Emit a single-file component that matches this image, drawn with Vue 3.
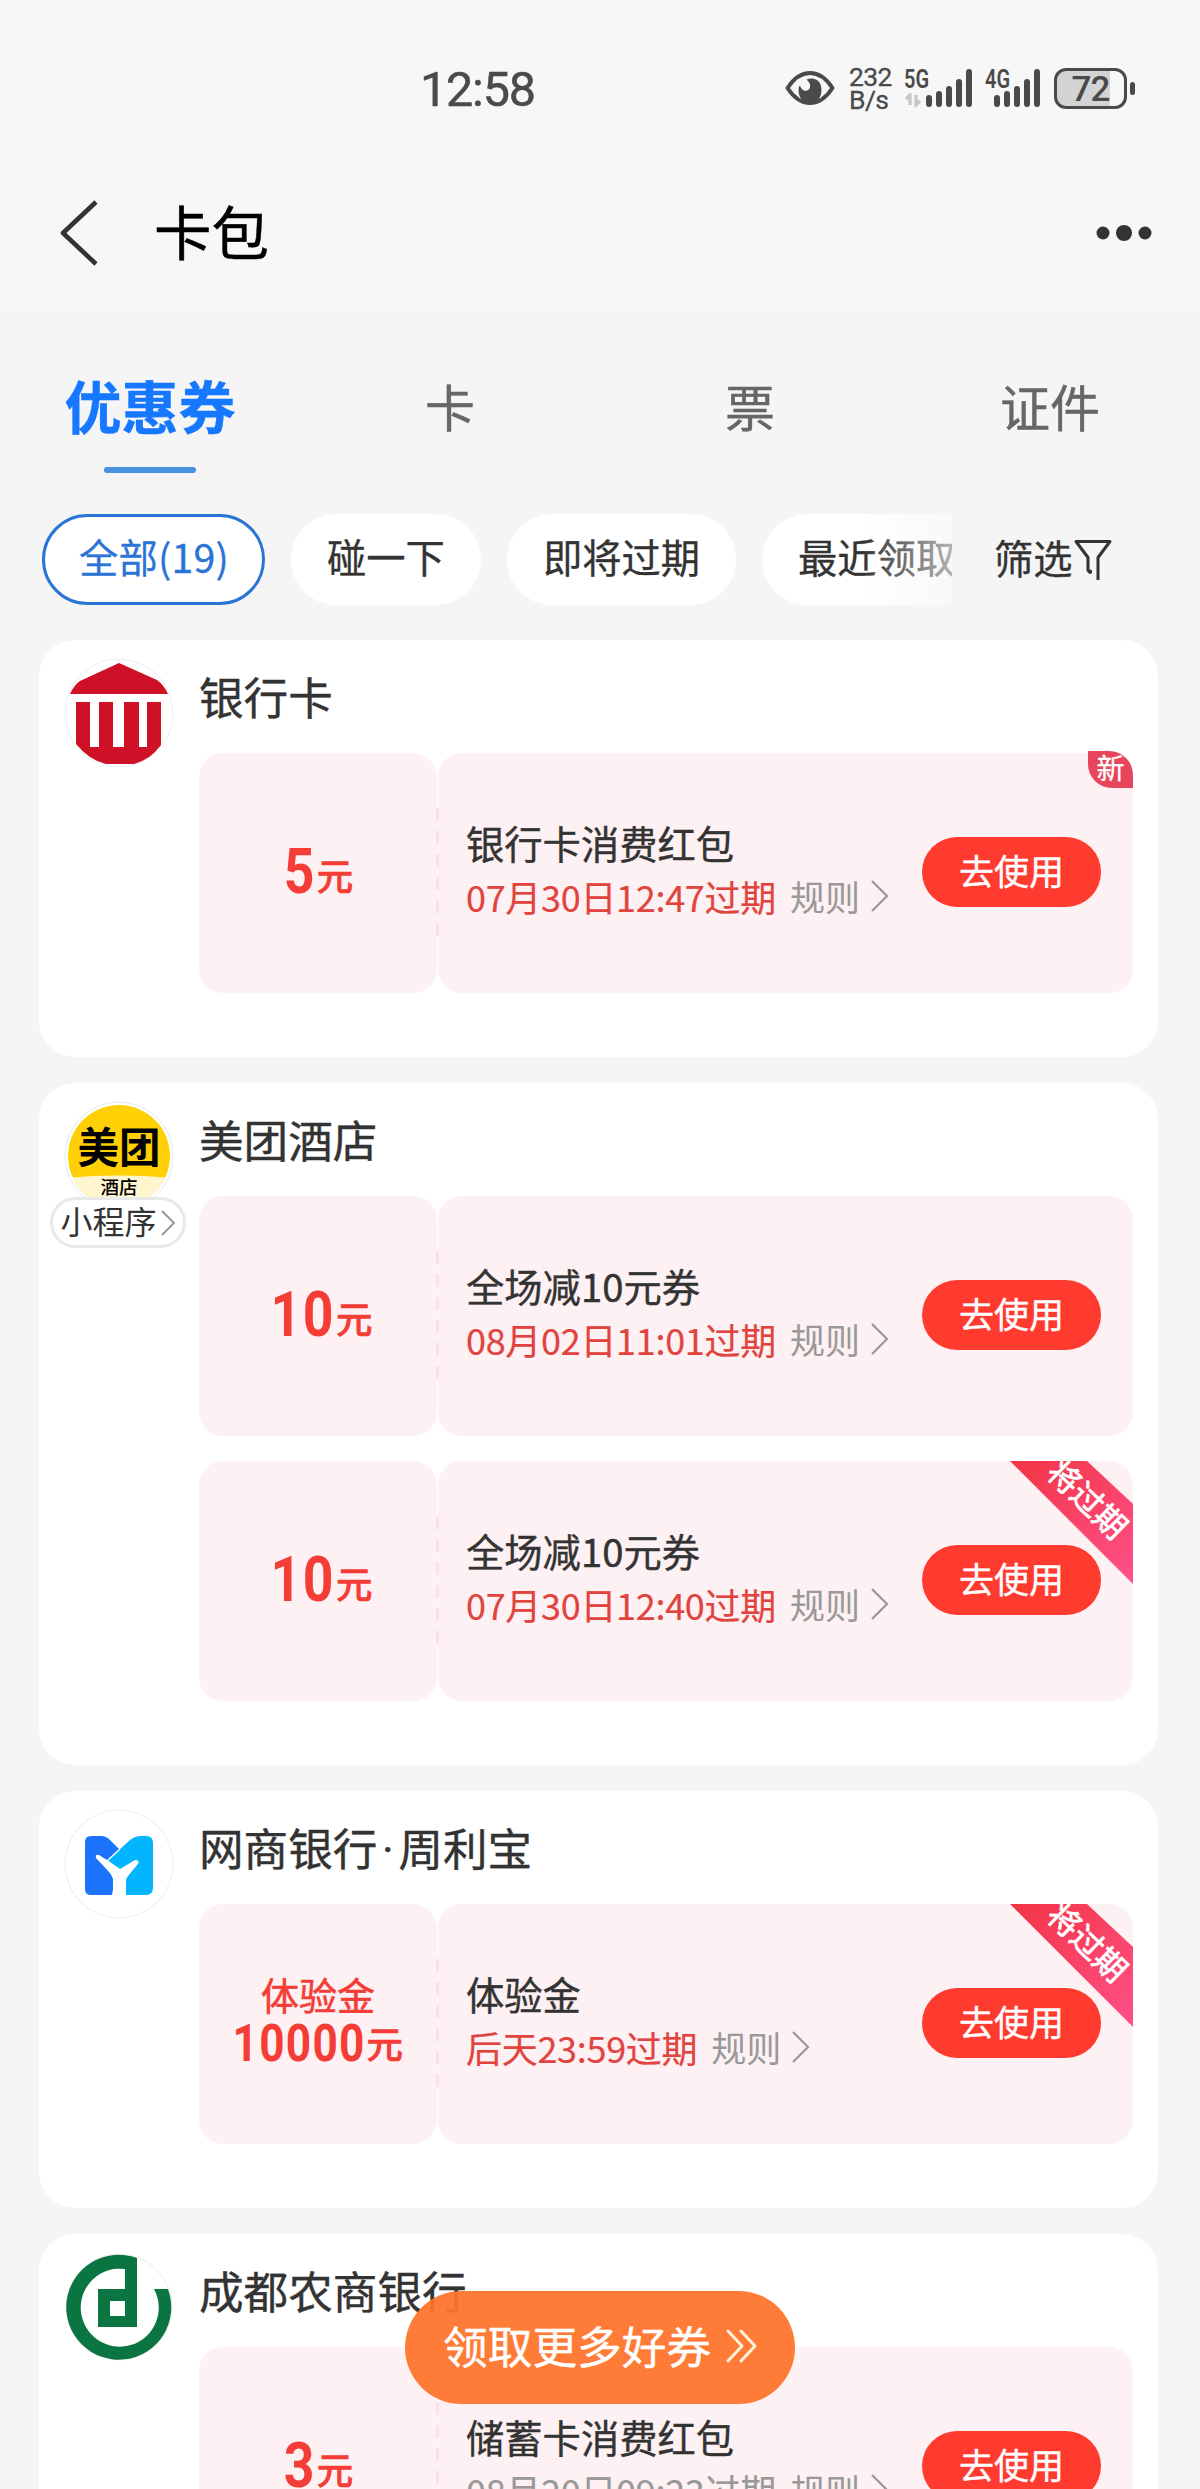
<script setup>
const tabs = ['优惠券', '卡', '票', '证件']
const chips = [
  { label: '全部(19)', active: true },
  { label: '碰一下' },
  { label: '即将过期' },
  { label: '最近领取' },
]
const bars = [12, 16, 21, 28, 38]
const groups = [
  {
    logo: 'bank',
    title: ['银行卡'],
    coupons: [{ amount: '5', name: '银行卡消费红包', date: '07月30日12:47过期', tag: 'new' }],
  },
  {
    logo: 'meituan',
    title: ['美团酒店'],
    mini: true,
    coupons: [
      { amount: '10', name: '全场减10元券', date: '08月02日11:01过期' },
      { amount: '10', name: '全场减10元券', date: '07月30日12:40过期', tag: 'soon' },
    ],
  },
  {
    logo: 'mybank',
    title: ['网商银行', '周利宝'],
    coupons: [{ label: '体验金', amount: '10000', name: '体验金', date: '后天23:59过期', tag: 'soon' }],
  },
  {
    logo: 'cdrcb',
    title: ['成都农商银行'],
    coupons: [{ amount: '3', name: '储蓄卡消费红包', date: '08月20日09:23过期', muted: true }],
  },
]
</script>

<template>
  <div class="page">
    <header class="top">
      <div class="status">
        <span class="clock">12:58</span>
        <svg class="eye" width="50" height="36" viewBox="0 0 50 36">
          <path d="M2.500 18C9 8 16 3 25 3s16 5 22.500 15C41 28 34 33 25 33S9 28 2.500 18Z" fill="none" stroke="#4a4a4a" stroke-width="4" stroke-linejoin="round" />
          <path d="M21.500 9.500C31 6 36.500 12 36.500 20c0 8-5 13-11.500 13S13.500 28 13.500 20c0-2 .5-3.500 1.500-4.500 1 4 4 6 7 5 4.500-1.500 4-7.500-.5-11Z" fill="#4a4a4a" />
        </svg>
        <div class="speed"><span>232</span><span>B/s</span></div>
        <div class="signal">
          <span class="net">5G</span>
          <svg class="arrows" width="18" height="14" viewBox="0 0 18 14">
            <path d="M2 6 6 2v10M16 8l-4 4V2" fill="none" stroke="#c6c6c6" stroke-width="3.200" />
          </svg>
          <div class="bars"><i v-for="h in bars" :key="h" :style="{ height: h + 'px' }"></i></div>
        </div>
        <div class="signal second">
          <span class="net">4G</span>
          <div class="bars"><i v-for="h in bars" :key="h" :style="{ height: h + 'px' }"></i></div>
        </div>
        <div class="battery">72</div>
        <i class="nub"></i>
      </div>
      <div class="nav">
        <svg class="back" width="40" height="68" viewBox="0 0 40 68">
          <path d="M37 3 4 34 37 65" fill="none" stroke="#333" stroke-width="4.600" stroke-linejoin="round" />
        </svg>
        <h1>卡包</h1>
        <svg class="more" width="60" height="20" viewBox="0 0 60 20">
          <circle cx="9" cy="10" r="6.500" fill="#333" /><circle cx="30" cy="10" r="8" fill="#333" /><circle cx="51" cy="10" r="6.500" fill="#333" />
        </svg>
      </div>
    </header>

    <nav class="tabs">
      <div v-for="(t, i) in tabs" :key="t" class="tab" :class="{ on: i === 0 }">{{ t }}</div>
    </nav>

    <div class="filters">
      <div class="chips">
        <span v-for="c in chips" :key="c.label" class="chip" :class="{ active: c.active }">{{ c.label }}</span>
      </div>
      <div class="filter">
        <span>筛选</span>
        <svg width="40" height="44" viewBox="0 0 40 44">
          <path d="M17.500 35V33L17 34.500 15 32.500V19.500L3 3.500H37L25 19.500V42" fill="none" stroke="#333" stroke-width="3" stroke-linejoin="round" />
        </svg>
      </div>
    </div>

    <main class="list">
      <section v-for="g in groups" :key="g.logo" class="card">
        <div class="side">
          <svg v-if="g.logo === 'bank'" class="logo" width="110" height="110" viewBox="0 0 110 110">
            <circle cx="55" cy="55" r="54" fill="#fff" stroke="#e9eef0" />
            <path d="M55 5 93 22Q100 27 104 36H6Q10 27 16 23Z" fill="#ce1126" />
            <path d="M12 44H26V89H35V44H49V89H60V44H75V89H83V44H97V87Q86 102 70 106H42Q25 102 12 86Z" fill="#ce1126" />
          </svg>
          <svg v-else-if="g.logo === 'meituan'" class="logo" width="110" height="110" viewBox="0 0 110 110">
            <defs><clipPath id="mt"><circle cx="55" cy="55" r="51" /></clipPath></defs>
            <circle cx="55" cy="55" r="54" fill="#fff" stroke="#e9e9e9" />
            <g clip-path="url(#mt)">
              <rect width="110" height="110" fill="#ffd005" />
              <path d="M0 77Q55 72 110 77V110H0Z" fill="#fff5cf" />
            </g>
            <text x="55" y="62" text-anchor="middle" font-size="41.500" font-weight="700">美团</text>
            <text x="55" y="93" text-anchor="middle" font-size="18.500" font-weight="500">酒店</text>
          </svg>
          <svg v-else-if="g.logo === 'mybank'" class="logo" width="110" height="110" viewBox="0 0 110 110">
            <circle cx="55" cy="55" r="54" fill="#fff" stroke="#ececec" />
            <path d="M27 27H37Q42 27 46 31L56 41 48 86H27Q21 86 21 80V33Q21 27 27 27Z" fill="#1b74fb" />
            <path d="M43 52 66 31Q71 27 77 27H82Q89 27 89 34V79Q89 86 82 86H62L54 70Z" fill="#03b4ff" />
            <path d="M43 52 56 40" stroke="#fff" stroke-width="1.500" />
            <path d="M49 86V70Q48 66 45 63L32 49Q31 45 35 46L46 53 56 60 71 51Q76 51 74 55L64 67Q62 69 62 73V86Z" fill="#fff" />
          </svg>
          <svg v-else class="logo" width="110" height="110" viewBox="0 0 110 110">
            <circle cx="55" cy="55" r="53" fill="#fff" stroke="#ececec" />
            <path fill="#0a7540" fill-rule="evenodd" d="M73 6A52.500 52.500 0 1 0 104 37H90A39 39 0 1 1 61 17V37H34V75H73ZM46 49H61V64H46Z" />
          </svg>
          <div v-if="g.mini" class="mini">
            <span>小程序</span>
            <svg width="16" height="28" viewBox="0 0 16 28"><path d="M2 2 14 14 2 26" fill="none" stroke="#999" stroke-width="2" /></svg>
          </div>
        </div>
        <div class="body">
          <h2>
            <template v-for="(part, i) in g.title" :key="part"><span v-if="i" class="dot">·</span>{{ part }}</template>
          </h2>
          <div v-for="(c, i) in g.coupons" :key="i" class="coupon">
            <div class="worth">
              <div v-if="c.label" class="label">{{ c.label }}</div>
              <div class="sum" :class="{ small: c.label }"><b>{{ c.amount }}</b><span>元</span></div>
            </div>
            <div class="detail">
              <i class="tear"></i>
              <div class="info">
                <div class="name">{{ c.name }}</div>
                <div class="meta">
                  <span class="date" :class="{ muted: c.muted }">{{ c.date }}</span>
                  <span class="rule">规则</span>
                  <svg width="20" height="34" viewBox="0 0 20 34"><path d="M2 2 17 17 2 32" fill="none" stroke="#999" stroke-width="2.200" /></svg>
                </div>
              </div>
              <button class="use">去使用</button>
              <span v-if="c.tag === 'new'" class="new">新</span>
              <svg v-if="c.tag === 'soon'" class="soon" width="124" height="124" viewBox="0 0 124 124">
                <defs>
                  <linearGradient :id="'r' + g.logo" x1="0" y1="0" x2="1" y2="1">
                    <stop offset="0" stop-color="#f23545" /><stop offset="1" stop-color="#ff5088" />
                  </linearGradient>
                </defs>
                <path d="M1 0H78L124 43V123Z" :fill="'url(#r' + g.logo + ')'" />
                <text transform="translate(78 39) rotate(44)" y="11" text-anchor="middle" font-size="32" fill="#fff" stroke="#fff" stroke-width=".7">将过期</text>
              </svg>
            </div>
          </div>
        </div>
      </section>
    </main>

    <div class="fab">
      <span>领取更多好券</span>
      <svg width="34" height="36" viewBox="0 0 34 36">
        <path d="M3 3 17 18 3 33M16 3 30 18 16 33" fill="none" stroke="#fff2d8" stroke-width="3" stroke-linecap="round" stroke-linejoin="round" />
      </svg>
    </div>
  </div>
</template>

<style>
body { background: #f5f5f5; }
</style>

<style scoped>
.page {
  position: relative;
  width: 1200px;
  height: 2489px;
  overflow: hidden;
  background: #f5f5f5;
  color: #333;
  font-family: "Noto Sans CJK SC", sans-serif;
}
.page * { box-sizing: border-box; }
svg { display: block; flex: none; }
h1, h2 { margin: 0; font-weight: 400; }
.top { height: 310px; background: #f7f7f7; }
.status {
  display: flex;
  align-items: center;
  height: 176px;
  color: #4a4a4a;
  font-family: Roboto, sans-serif;
}
.clock {
  width: 365px;
  margin-left: 420px;
  font-size: 48.500px;
  letter-spacing: -1.200px;
  line-height: 50px;
  padding-top: 3px;
  -webkit-text-stroke: .5px;
}
.speed {
  width: 44px;
  margin-left: 14px;
  display: flex;
  flex-direction: column;
  font-size: 26.500px;
  line-height: 23px;
  letter-spacing: -.6px;
  -webkit-text-stroke: .3px;
}
.signal { position: relative; width: 68px; height: 38px; margin-left: 11px; display: flex; justify-content: flex-end; }
.signal.second { margin-left: 0; }
.net { position: absolute; left: 0; top: -1px; font-size: 25px; line-height: 24px; font-weight: 600; transform: scaleX(.8); transform-origin: left; }
.signal.second .net { left: 13px; }
.arrows { position: absolute; left: 0; bottom: 0; }
.bars { display: flex; align-items: flex-end; gap: 4px; }
.bars i { width: 6px; border-radius: 3px; background: #4a4a4a; }
.battery {
  width: 73px;
  height: 41px;
  margin-left: 14px;
  border: 3px solid #4a4a4a;
  border-radius: 12px;
  background: linear-gradient(90deg, #d3d3d3 53px, transparent 53px);
  font-size: 35px;
  font-weight: 500;
  letter-spacing: -1px;
  line-height: 37px;
  text-align: center;
}
.nub { width: 5px; height: 13px; margin-left: 3px; border-radius: 3px; background: #4a4a4a; }
.nav { display: flex; align-items: center; height: 114px; padding: 0 46px 0 59px; }
.nav h1 { margin-left: 55px; padding-bottom: 6px; color: #000; font-size: 57.500px; line-height: 74px; -webkit-text-stroke: .5px; }
.more { margin-left: auto; }
.tabs { display: flex; height: 165px; padding-top: 54px; }
.tab { position: relative; width: 300px; height: 111px; text-align: center; font-size: 50px; line-height: 82px; color: #666; -webkit-text-stroke: .4px; }
.tab.on { color: #1677ff; font-weight: 700; font-size: 57px; line-height: 80px; }
.tab.on::after {
  content: "";
  position: absolute;
  left: 104px;
  top: 103px;
  width: 92px;
  height: 6px;
  border-radius: 3px;
  background: #4a90e2;
}
.filters { display: flex; height: 165px; padding: 39px 0 0 42px; font-size: 39.300px; line-height: 84px; }
.chips { position: relative; display: flex; gap: 26px; width: 910px; height: 92px; overflow: hidden; }
.chips::after {
  content: "";
  position: absolute;
  right: 0;
  top: 0;
  width: 90px;
  height: 92px;
  background: linear-gradient(90deg, rgba(245, 245, 245, 0), rgba(245, 245, 245, .65));
}
.chip { flex: none; height: 91px; padding: 0 36px; border-radius: 46px; background: #fff; white-space: nowrap; -webkit-text-stroke: .3px; }
.chip.active { padding: 0 33px 0 34px; border: 3px solid #2a74d5; color: #2a74d5; line-height: 78px; letter-spacing: .2px; }
.filter { display: flex; align-items: center; height: 91px; margin-left: 42px; -webkit-text-stroke: .3px; }
.filter span { padding-bottom: 6px; }
.list { display: flex; flex-direction: column; gap: 26px; padding: 0 42px 0 39px; }
.card { display: flex; min-height: 416px; padding: 18px 25px 64px 0; border-radius: 36px; background: #fff; }
.side { width: 160px; display: flex; flex-direction: column; align-items: center; }
.mini {
  position: relative;
  display: flex;
  align-items: center;
  justify-content: center;
  gap: 3px;
  width: 136px;
  height: 51px;
  margin-top: -14px;
  margin-right: 2px;
  border: 3px solid #e9e9e9;
  border-radius: 26px;
  background: #fff;
  font-size: 32px;
  line-height: 40px;
  white-space: nowrap;
}
.mini span { padding-bottom: 5px; }
.body { width: 934px; }
.body h2 { height: 95px; font-size: 44.600px; line-height: 75px; -webkit-text-stroke: .4px; }
.dot { display: inline-block; width: 21px; text-align: center; font-family: Roboto, sans-serif; }
.coupon { display: flex; gap: 1px; height: 240px; }
.coupon + .coupon { margin-top: 25px; }
.worth { width: 238px; border-radius: 24px; background: #fef1f3; display: flex; flex-direction: column; align-items: center; justify-content: center; color: #f43d36; }
.label { height: 48px; font-size: 38px; line-height: 45px; margin-top: -8px; -webkit-text-stroke: .6px; }
.sum { display: flex; align-items: baseline; height: 80px; margin: -2px 5px 0 0; line-height: 80px; font-size: 36px; }
.sum span { position: relative; top: -3px; -webkit-text-stroke: 1.300px; }
.sum b { margin-right: 1px; font: 700 63px/80px Roboto, sans-serif; letter-spacing: 2px; transform: scaleX(.85); transform-origin: right; }
.sum.small { height: 50px; margin: 0 2px 0 0; line-height: 50px; }
.sum.small b { margin-left: -22px; font-size: 52px; line-height: 50px; letter-spacing: 1.500px; transform: scaleX(.85); }
.detail { position: relative; display: flex; align-items: flex-start; width: 695px; border-radius: 24px; background: #fef1f3; }
.tear {
  position: absolute;
  left: -2px;
  top: 55px;
  width: 3px;
  height: 130px;
  background: repeating-linear-gradient(#fbe1e5 0 13px, #fef4f5 13px 23px);
}
.info { width: 456px; padding: 63px 0 0 28px; }
.name { height: 53px; font-size: 38.300px; line-height: 53px; white-space: nowrap; -webkit-text-stroke: .4px; }
.meta { display: flex; align-items: center; height: 54px; font-size: 36px; line-height: 52px; white-space: nowrap; }
.date { color: #e1443f; letter-spacing: -.3px; -webkit-text-stroke: .2px; }
.date.muted { color: #999; }
.rule { margin: 0 10px 0 14px; color: #999; font-size: 35px; }
.use {
  width: 179px;
  height: 70px;
  margin: 84px 0 0 28px;
  padding: 0 0 5px;
  border: 0;
  border-radius: 35px;
  background: #ff3a2f;
  color: #fff;
  font: 400 35px/62px "Noto Sans CJK SC", sans-serif;
  -webkit-text-stroke: .4px;
}
.new {
  position: absolute;
  right: 0;
  top: -2px;
  width: 45px;
  height: 37px;
  border-radius: 0 24px 0 24px;
  background: #e8455c;
  color: #fff;
  font-size: 28px;
  line-height: 32px;
  text-align: center;
  -webkit-text-stroke: .3px;
}
.soon { position: absolute; right: 0; top: 0; overflow: hidden; }
.fab {
  position: absolute;
  left: 405px;
  top: 2291px;
  display: flex;
  align-items: center;
  gap: 14px;
  width: 390px;
  height: 113px;
  padding: 0 0 3px 38px;
  border-radius: 57px;
  background: rgba(255, 116, 44, .94);
  color: #fff;
  font-size: 44.700px;
  white-space: nowrap;
  -webkit-text-stroke: .4px;
}
.fab span { padding-bottom: 3px; }
</style>
